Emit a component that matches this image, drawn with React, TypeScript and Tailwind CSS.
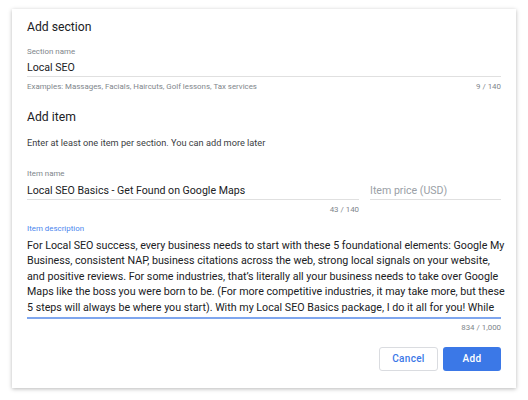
import React from 'react'

const descLines = [
  'For Local SEO success, every business needs to start with these 5 foundational elements: Google My',
  'Business, consistent NAP, business citations across the web, strong local signals on your website,',
  'and positive reviews. For some industries, that\u2019s literally all your business needs to take over Google',
  'Maps like the boss you were born to be. (For more competitive industries, it may take more, but these',
  '5 steps will always be where you start). With my Local SEO Basics package, I do it all for you! While',
]

function Label({ children, blue }: { children: React.ReactNode; blue?: boolean }) {
  return (
    <div className={`text-[7.9px] leading-[11px] ${blue ? 'text-[#4a86ee]' : 'text-[#80868b]'}`}>
      {children}
    </div>
  )
}

export default function App() {
  return (
    <div className="w-[528px] h-[400px] bg-white overflow-hidden font-['Roboto',sans-serif] pt-[9px] pl-[12px]">
      <div className="w-[504px] h-[379px] bg-white shadow-[0_1px_4px_rgba(0,0,0,0.28)] px-[15px] pt-[9px]">
        {/* Section */}
        <h2 className="text-[12.2px] leading-[18px] text-[#202124]">Add section</h2>

        <div className="mt-[9.5px]">
          <Label>Section name</Label>
          <div className="mt-[3.5px] border-b border-[#e0e0e0] h-[17px] text-[10.6px] leading-[16px] text-[#202124]">
            Local SEO
          </div>
          <div className="mt-[4px] flex justify-between text-[7.9px] leading-[11px] text-[#80868b]">
            <span>Examples: Massages, Facials, Haircuts, Golf lessons, Tax services</span>
            <span>9 / 140</span>
          </div>
        </div>

        {/* Item */}
        <h2 className="mt-[16px] text-[12.2px] leading-[18px] text-[#202124]">Add item</h2>
        <p className="mt-[10px] text-[9.2px] leading-[14px] text-[#3c4043]">
          Enter at least one item per section. You can add more later
        </p>

        <div className="mt-[17.5px] flex gap-[11px]">
          <div className="w-[332px]">
            <Label>Item name</Label>
            <div className="mt-[4.5px] border-b border-[#e0e0e0] h-[17px] text-[10.6px] leading-[16px] text-[#202124]">
              Local SEO Basics - Get Found on Google Maps
            </div>
            <div className="mt-[4px] text-right text-[7.9px] leading-[11px] text-[#80868b]">43 / 140</div>
          </div>
          <div className="flex-1 pt-[15.5px]">
            <div className="border-b border-[#e0e0e0] h-[17px] text-[10.6px] leading-[16px] text-[#9aa0a6]">
              Item price (USD)
            </div>
          </div>
        </div>

        <div className="mt-[8px]">
          <Label blue>Item description</Label>
          <div className="mt-[3.5px] text-[10.7px] leading-[15.5px] text-[#202124]">
            {descLines.map((l) => (
              <div key={l} className="whitespace-nowrap">{l}</div>
            ))}
          </div>
          <div className="mt-[1.5px] h-[2px] bg-[#7fa6ee]" />
          <div className="mt-[3.5px] text-right text-[7.9px] leading-[11px] text-[#80868b]">834 / 1,000</div>
        </div>

        <div className="mt-[13.5px] flex justify-end gap-[5px]">
          <button className="w-[59px] h-[24px] rounded-[3px] border border-[#dadce0] bg-white text-[10px] font-medium tracking-[0.3px] text-[#3b78e7]">
            Cancel
          </button>
          <button className="w-[58px] h-[24px] rounded-[3px] bg-[#3b78e7] text-[10px] font-medium tracking-[0.3px] text-white">
            Add
          </button>
        </div>
      </div>
    </div>
  )
}
